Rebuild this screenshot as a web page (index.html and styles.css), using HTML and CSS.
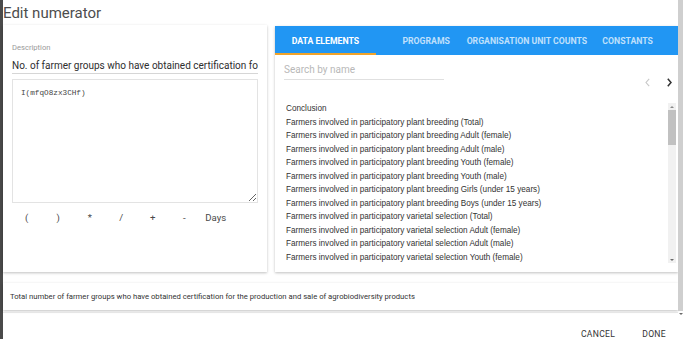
FILE: index.html
```html
<!DOCTYPE html>
<html lang="en">
<head>
<meta charset="utf-8">
<title>Edit numerator</title>
<link rel="stylesheet" href="styles.css">
</head>
<body>
<div class="screen">
  <div class="edge"></div>
  <div class="dialog">
    <h1 class="title">Edit numerator</h1>
    <div class="panels">
      <section class="card left">
        <label class="lbl" for="desc">Description</label>
        <input id="desc" class="desc" type="text" value="No. of farmer groups who have obtained certification for the production and sale of agrobiodiversity products">
        <textarea class="formula" spellcheck="false">I(mfqO8zx3CHf)</textarea>
        <div class="ops">
          <button class="op">(</button>
          <button class="op">)</button>
          <button class="op">*</button>
          <button class="op">/</button>
          <button class="op">+</button>
          <button class="op">-</button>
          <button class="op">Days</button>
        </div>
      </section>
      <section class="card right">
        <nav class="tabs">
          <div class="tab active">Data elements</div>
          <div class="tab">Programs</div>
          <div class="tab">Organisation unit counts</div>
          <div class="tab">Constants</div>
        </nav>
        <div class="tools">
          <input class="search" type="text" placeholder="Search by name">
          <div class="pager">
            <button class="pg off"><svg width="5" height="9" viewBox="0 0 5 9"><path d="M4.2 0.8 L1 4.5 L4.2 8.2" fill="none" stroke="#c8c8c8" stroke-width="1.1"/></svg></button>
            <button class="pg"><svg width="5" height="9" viewBox="0 0 5 9"><path d="M0.8 0.8 L4 4.5 L0.8 8.2" fill="none" stroke="#333" stroke-width="1.5"/></svg></button>
          </div>
        </div>
        <div class="list-wrap">
          <ul class="items">
            <li>Conclusion</li>
            <li>Farmers involved in participatory plant breeding (Total)</li>
            <li>Farmers involved in participatory plant breeding Adult (female)</li>
            <li>Farmers involved in participatory plant breeding Adult (male)</li>
            <li>Farmers involved in participatory plant breeding Youth (female)</li>
            <li>Farmers involved in participatory plant breeding Youth (male)</li>
            <li>Farmers involved in participatory plant breeding Girls (under 15 years)</li>
            <li>Farmers involved in participatory plant breeding Boys (under 15 years)</li>
            <li>Farmers involved in participatory varietal selection (Total)</li>
            <li>Farmers involved in participatory varietal selection Adult (female)</li>
            <li>Farmers involved in participatory varietal selection Adult (male)</li>
            <li>Farmers involved in participatory varietal selection Youth (female)</li>
          </ul>
          <div class="sbar">
            <div class="sb-btn"><span class="tri up"></span></div>
            <div class="sb-thumb"></div>
            <div class="sb-rest"></div>
            <div class="sb-btn"><span class="tri down"></span></div>
          </div>
        </div>
      </section>
    </div>
    <div class="card summary">Total number of farmer groups who have obtained certification for the production and sale of agrobiodiversity products</div>
    <div class="actions">
      <button class="act">Cancel</button>
      <button class="act">Done</button>
    </div>
  </div>
  <div class="pagebar">
    <div class="pb-track"></div>
    <div class="pb-btn"><span class="tri down"></span></div>
  </div>
</div>
</body>
</html>
```

FILE: styles.css
```css
:root {
  --ui: "Roboto", "Liberation Sans", sans-serif;
}

* { box-sizing: border-box; }

html, body {
  margin: 0;
  padding: 0;
  background: #fff;
}

body {
  font-family: var(--ui);
  color: #333;
}

button {
  background: none;
  border: 0;
  padding: 0;
  margin: 0;
  font: inherit;
  color: inherit;
  cursor: pointer;
}

.screen {
  display: flex;
  height: 339px;
  overflow: hidden;
}

.edge {
  width: 3px;
  flex: none;
  background: #4a4a4a;
}

.dialog {
  flex: 1;
  min-width: 0;
  display: flex;
  flex-direction: column;
}

.title {
  margin: 0;
  height: 25px;
  font-size: 15px;
  line-height: 26px;
  font-weight: normal;
  color: #4d4d4d;
  white-space: nowrap;
}

.panels {
  display: flex;
  gap: 8px;
  height: 247px;
}

.card {
  background: #fff;
  box-shadow: 0 1px 3px rgba(0, 0, 0, 0.16), 0 1px 2px rgba(0, 0, 0, 0.1);
}

/* left card */
.left {
  width: 264px;
  flex: none;
  padding: 0 9px;
  display: flex;
  flex-direction: column;
}

.lbl {
  margin-top: 18px;
  font-size: 7.6px;
  line-height: 10px;
  color: #9a9a9a;
}

.desc {
  margin-top: 1px;
  width: 246px;
  height: 20px;
  padding: 3px 0 0;
  border: 0;
  border-bottom: 1px solid #d6d6d6;
  outline: none;
  font-family: var(--ui);
  font-size: 10px;
  color: #2e2e2e;
  background: transparent;
}

.formula {
  margin-top: 5px;
  width: 246px;
  height: 124px;
  padding: 8px;
  border: 1px solid #e3e3e3;
  resize: vertical;
  outline: none;
  font-family: "Liberation Mono", monospace;
  font-size: 7.7px;
  line-height: 10px;
  color: #444;
}

.ops {
  margin-top: 8px;
  margin-left: -1px;
  display: flex;
}

.op {
  width: 31.5px;
  height: 14px;
  line-height: 14px;
  font-size: 9.6px;
  color: #4a4a4a;
  text-align: center;
}

/* right card */
.right {
  width: 403px;
  flex: none;
  margin-top: 1px;
  height: 246px;
  display: flex;
  flex-direction: column;
  overflow: hidden;
}

.tabs {
  display: flex;
  height: 29px;
  background: #2196f3;
}

.tab {
  flex: 1 1 0;
  min-width: 0;
  display: flex;
  align-items: center;
  justify-content: center;
  font-size: 8.7px;
  font-weight: bold;
  text-transform: uppercase;
  color: rgba(255, 255, 255, 0.72);
  white-space: nowrap;
}

.tab.active {
  color: #fff;
  box-shadow: inset 0 -2px 0 #f0a32a;
}

.tools {
  display: flex;
  justify-content: space-between;
  align-items: flex-start;
  height: 34px;
  padding: 5px 0 0 9px;
}

.search {
  width: 160px;
  height: 20px;
  padding: 0;
  border: 0;
  border-bottom: 1px solid #e0e0e0;
  outline: none;
  font-family: var(--ui);
  font-size: 10px;
  color: #333;
  background: transparent;
}

.search::placeholder {
  color: #b8b8b8;
}

.pager {
  margin-top: 15px;
  display: flex;
  gap: 7.5px;
  padding-right: 2px;
}

.pg {
  width: 14px;
  height: 14px;
  display: flex;
  align-items: center;
  justify-content: center;
}

.list-wrap {
  margin: 12px 2px 0 11px;
  height: 162px;
  display: flex;
}

.items {
  flex: 1;
  min-width: 0;
  margin: 0;
  padding: 1px 0 0;
  list-style: none;
  overflow: hidden;
}

.items li {
  font-family: "Liberation Sans", Arial, sans-serif;
  font-size: 8.2px;
  line-height: 13.5px;
  color: #333;
  white-space: nowrap;
}

.sbar {
  width: 8px;
  flex: none;
  margin-top: 2px;
  height: 160px;
  background: #f1f1f1;
  display: flex;
  flex-direction: column;
}

.sb-btn {
  height: 7px;
  display: flex;
  align-items: center;
  justify-content: center;
}

.sb-thumb {
  height: 35px;
  background: #c1c1c1;
}

.sb-rest {
  flex: 1;
}

.tri {
  width: 0;
  height: 0;
  border-left: 2px solid transparent;
  border-right: 2px solid transparent;
}

.tri.up {
  border-bottom: 2px solid #8a8a8a;
}

.tri.down {
  border-top: 2px solid #6a6a6a;
}

/* bottom */
.summary {
  margin-top: 11px;
  height: 27px;
  padding: 0 7px;
  line-height: 27px;
  font-size: 7.7px;
  color: #333;
  white-space: nowrap;
  overflow: hidden;
}

.actions {
  margin-top: 2px;
  border-top: 1px solid #e6e6e6;
  display: flex;
  justify-content: flex-end;
  gap: 3px;
  padding-top: 16px;
}

.act {
  padding: 0 12px;
  font-size: 8.6px;
  line-height: 10px;
  letter-spacing: 0.3px;
  text-transform: uppercase;
  color: #333;
}

.pagebar {
  width: 5px;
  flex: none;
  display: flex;
  flex-direction: column;
}

.pb-track {
  height: 311px;
  background: #cfcfcf;
}

.pb-btn {
  height: 5px;
  display: flex;
  align-items: center;
  justify-content: center;
}
```
